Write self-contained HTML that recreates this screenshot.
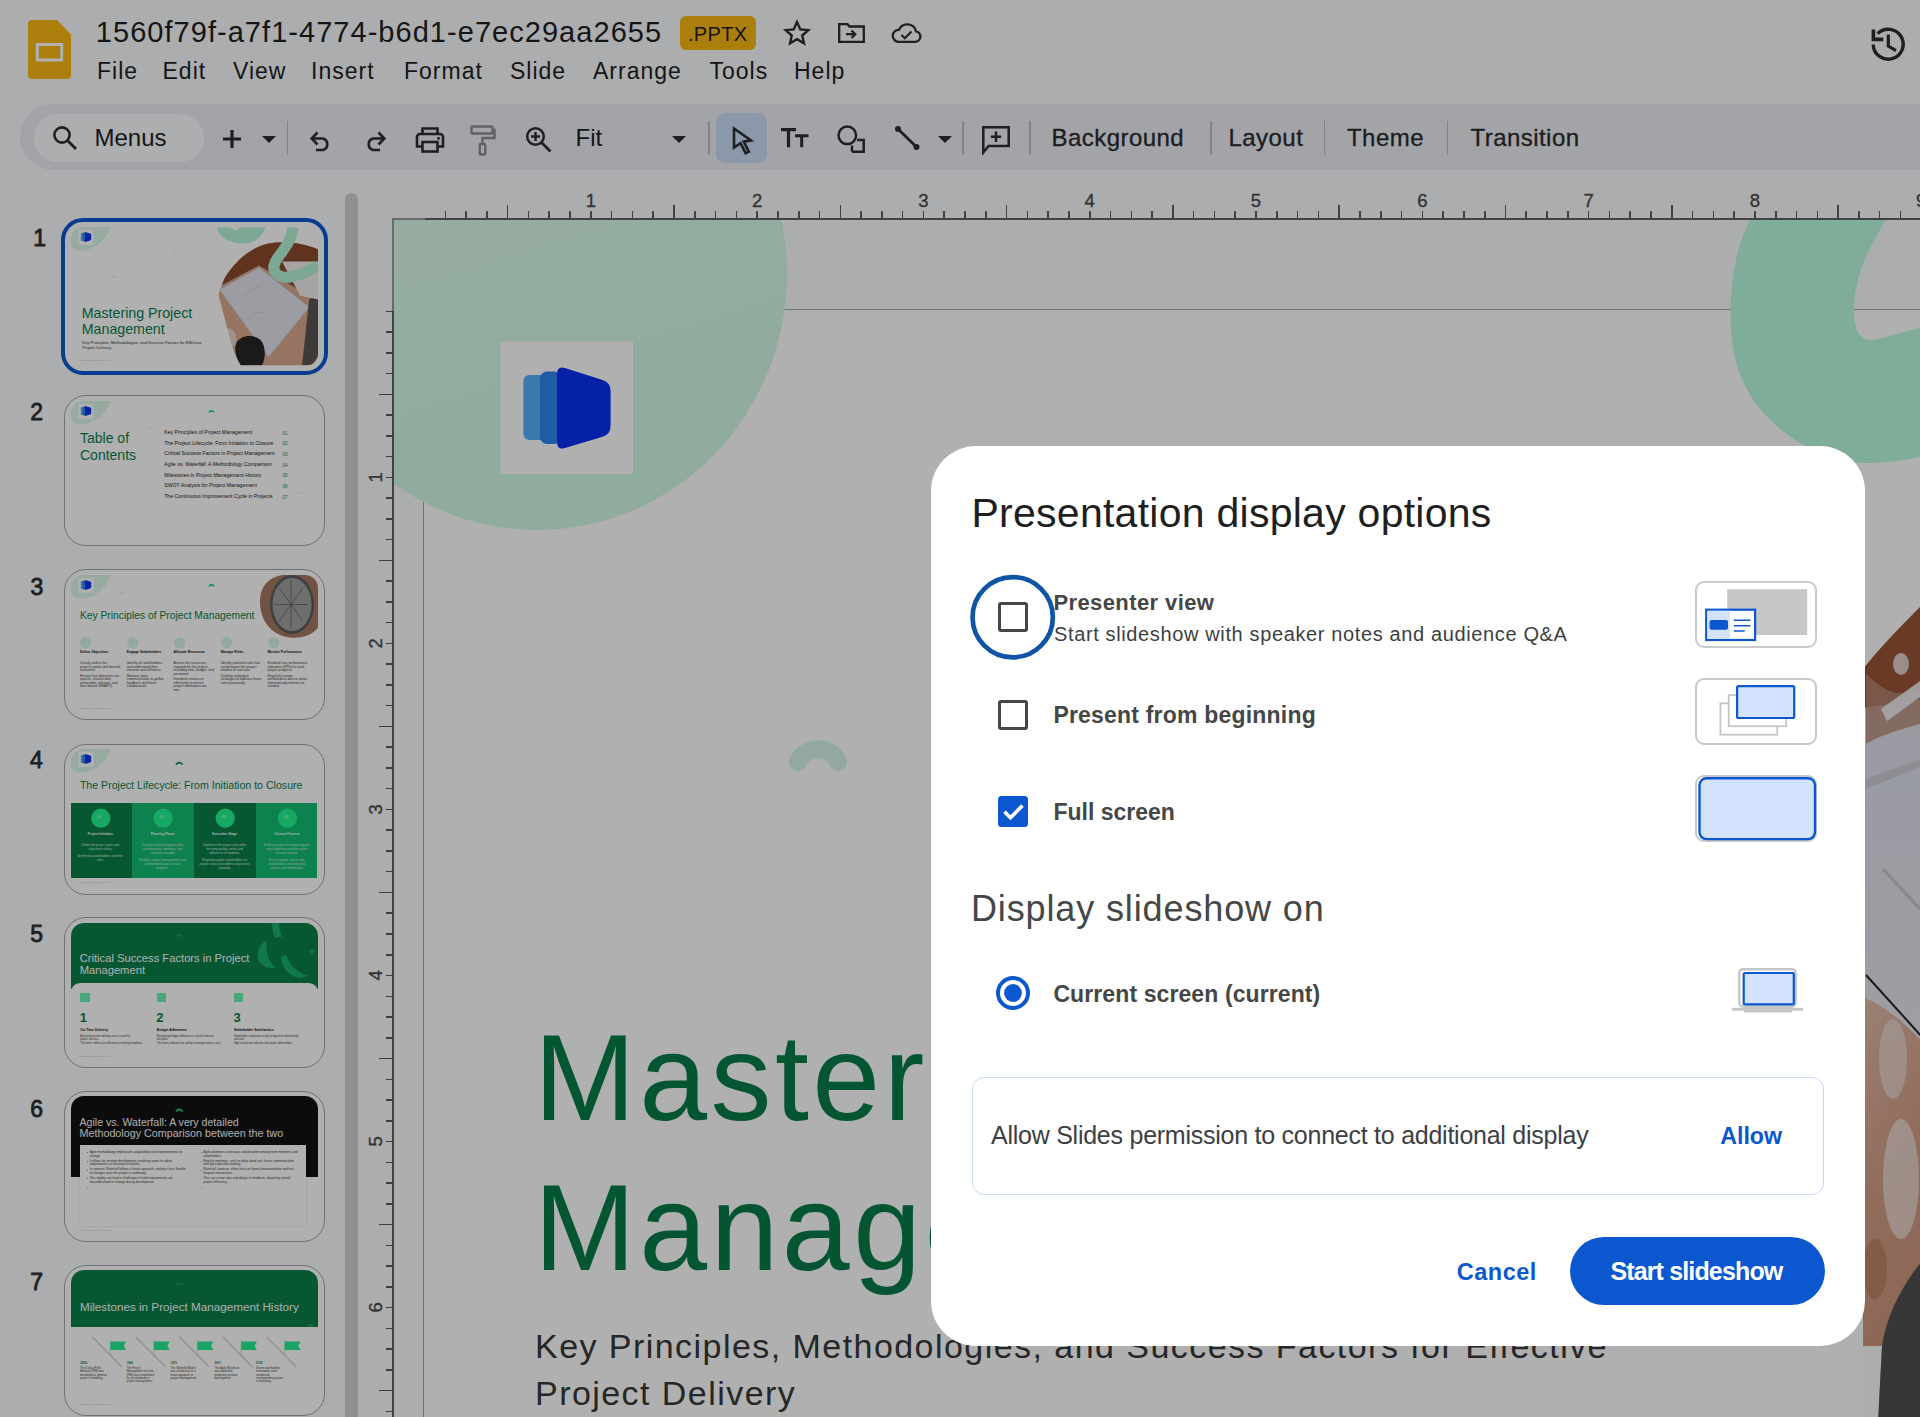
<!DOCTYPE html>
<html><head><meta charset="utf-8">
<style>
*{box-sizing:border-box;margin:0;padding:0}
html,body{width:1920px;height:1417px;overflow:hidden}
body{position:relative;background:#f9fbfd;font-family:"Liberation Sans",sans-serif;color:#1f1f1f}
.a{position:absolute}
.t{position:absolute;line-height:1;white-space:nowrap}
svg{position:absolute;overflow:visible}
/* thumbnails */
.fr{position:absolute;left:64px;width:261px;height:151px;border:1.6px solid #a3a4a6;border-radius:22px;overflow:hidden;background:#fff}
.num{position:absolute;font-size:23px;line-height:1;color:#2e2e30;-webkit-text-stroke:0.8px #2e2e30}
#scrim{position:absolute;left:0;top:0;width:1920px;height:1417px;background:rgba(0,0,0,0.31)}
#dlg{position:absolute;left:931px;top:446px;width:934px;height:900px;background:#fff;border-radius:45px}
.card{position:absolute;left:764px;width:122px;height:67px;border:2px solid #c7c9cb;border-radius:9px;background:#fff}
.cb{position:absolute;left:67px;width:30px;height:30px;border:3.3px solid #444746;border-radius:3px}
.lbl{position:absolute;left:124px;line-height:1;white-space:nowrap;color:#444746;font-weight:bold}
</style></head><body>


<!-- ============ HEADER ============ -->
<svg style="left:28px;top:20px" width="43" height="59" viewBox="0 0 43 59">
  <path d="M4 0H29L43 14.5V55A4 4 0 0 1 39 59H4A4 4 0 0 1 0 55V4A4 4 0 0 1 4 0Z" fill="#f9b814"/>
  <rect x="9.3" y="24.5" width="24.4" height="15.5" fill="none" stroke="#fff" stroke-width="3"/>
</svg>
<div class="t" id="title" style="left:95.8px;top:18px;font-size:29px;letter-spacing:1.04px;color:#1f1f1f">1560f79f-a7f1-4774-b6d1-e7ec29aa2655</div>
<div class="a" style="left:680px;top:16px;width:76px;height:34px;background:#f9b814;border-radius:6px"></div>
<div class="t" style="left:688px;top:23.8px;font-size:20px;color:#1f1f1f;letter-spacing:0.3px">.PPTX</div>
<!-- star -->
<svg style="left:781px;top:18px" width="32" height="30" viewBox="0 0 24 24"><path d="M12 3.2l2.6 5.9 6.4.6-4.8 4.3 1.4 6.3L12 17l-5.6 3.3 1.4-6.3L3 9.7l6.4-.6z" fill="none" stroke="#2c2d30" stroke-width="1.9" stroke-linejoin="miter"/></svg>
<!-- folder move -->
<svg style="left:838px;top:23px" width="27" height="20" viewBox="0 0 27 20"><path d="M1.2 1.2H9.5L11.5 3.5H25.8V18.8H1.2Z" fill="none" stroke="#2c2d30" stroke-width="2.3"/><path d="M8 11.2H17M13.5 7.5L17.3 11.2L13.5 14.9" fill="none" stroke="#2c2d30" stroke-width="2.2"/></svg>
<!-- cloud done -->
<svg style="left:891px;top:24px" width="31" height="19" viewBox="0 0 31 19"><path d="M7.5 17.8H24.5A5.3 5.3 0 0 0 25 7.3A9 9 0 0 0 8 5.8A6 6 0 0 0 7.5 17.8Z" fill="none" stroke="#2c2d30" stroke-width="2.3"/><path d="M10.5 11L13.8 14.2L20.5 7.5" fill="none" stroke="#2c2d30" stroke-width="2.2"/></svg>
<!-- menus -->
<div class="t" style="left:97px;top:60.2px;font-size:23px;letter-spacing:1px">File</div>
<div class="t" style="left:162.5px;top:60.2px;font-size:23px;letter-spacing:1px">Edit</div>
<div class="t" style="left:233px;top:60.2px;font-size:23px;letter-spacing:1px">View</div>
<div class="t" style="left:311px;top:60.2px;font-size:23px;letter-spacing:1px">Insert</div>
<div class="t" style="left:404px;top:60.2px;font-size:23px;letter-spacing:1px">Format</div>
<div class="t" style="left:510px;top:60.2px;font-size:23px;letter-spacing:1px">Slide</div>
<div class="t" style="left:593px;top:60.2px;font-size:23px;letter-spacing:1px">Arrange</div>
<div class="t" style="left:709.5px;top:60.2px;font-size:23px;letter-spacing:1px">Tools</div>
<div class="t" style="left:794px;top:60.2px;font-size:23px;letter-spacing:1px">Help</div>
<!-- history -->
<svg style="left:1866px;top:22px" width="44" height="44" viewBox="0 0 44 44"><path d="M7.2 22.4A15 15 0 1 0 11.6 11.6" fill="none" stroke="#2c2d30" stroke-width="3.4"/><path d="M5.6 7.5V19.2H17.3V15.6H9.2V7.5Z" fill="#2c2d30"/><path d="M22.3 12.5V24L30 28.6" fill="none" stroke="#2c2d30" stroke-width="3.2"/></svg>

<!-- ============ TOOLBAR ============ -->
<div class="a" style="left:20px;top:104px;width:1950px;height:66px;background:#eceef2;border-radius:33px"></div>
<div class="a" style="left:34px;top:113.5px;width:170px;height:48.5px;background:#fbfcfe;border-radius:25px"></div>
<svg style="left:52px;top:125px" width="26" height="26" viewBox="0 0 26 26"><circle cx="10" cy="10" r="7.6" fill="none" stroke="#2c2d30" stroke-width="2.6"/><path d="M15.5 15.5L24 24" stroke="#2c2d30" stroke-width="2.8"/></svg>
<div class="t" style="left:94.5px;top:126.1px;font-size:24px;color:#1f1f1f">Menus</div>
<svg style="left:222px;top:129px" width="20" height="20" viewBox="0 0 20 20"><path d="M10 1V19M1 10H19" stroke="#2c2d30" stroke-width="3.2"/></svg>
<svg style="left:262px;top:136px" width="14" height="8" viewBox="0 0 14 8"><path d="M0 0H14L7 7Z" fill="#2c2d30"/></svg>
<!-- separators -->
<div class="a" style="left:286.7px;top:121px;width:1.8px;height:34px;background:#bfc0c2"></div>
<div class="a" style="left:708px;top:121px;width:1.8px;height:34px;background:#bfc0c2"></div>
<div class="a" style="left:962px;top:121px;width:1.8px;height:34px;background:#bfc0c2"></div>
<div class="a" style="left:1029px;top:121px;width:1.8px;height:34px;background:#bfc0c2"></div>
<div class="a" style="left:1210px;top:121px;width:1.8px;height:34px;background:#bfc0c2"></div>
<div class="a" style="left:1323.5px;top:121px;width:1.8px;height:34px;background:#bfc0c2"></div>
<div class="a" style="left:1446.5px;top:121px;width:1.8px;height:34px;background:#bfc0c2"></div>
<!-- undo / redo -->
<svg style="left:309px;top:130px" width="24" height="21" viewBox="0 0 24 21"><path d="M3 8.5H14A6 6 0 0 1 14 20H7" fill="none" stroke="#2c2d30" stroke-width="2.6"/><path d="M8.5 2.5L2.7 8.5L8.5 14.5" fill="none" stroke="#2c2d30" stroke-width="2.6"/></svg>
<svg style="left:363px;top:130px" width="24" height="21" viewBox="0 0 24 21"><path d="M21 8.5H10A6 6 0 0 0 10 20H17" fill="none" stroke="#2c2d30" stroke-width="2.6"/><path d="M15.5 2.5L21.3 8.5L15.5 14.5" fill="none" stroke="#2c2d30" stroke-width="2.6"/></svg>
<!-- print -->
<svg style="left:415px;top:127px" width="30" height="26" viewBox="0 0 30 26"><path d="M7.5 7V1.5H22.5V7" fill="none" stroke="#2c2d30" stroke-width="2.6"/><path d="M7.5 19.5H2V10A3 3 0 0 1 5 7H25A3 3 0 0 1 28 10V19.5H22.5" fill="none" stroke="#2c2d30" stroke-width="2.6"/><rect x="7.5" y="15" width="15" height="9.5" fill="none" stroke="#2c2d30" stroke-width="2.6"/><circle cx="23.5" cy="11.5" r="1.4" fill="#2c2d30"/></svg>
<!-- paint format (disabled) -->
<svg style="left:470px;top:125px" width="26" height="31" viewBox="0 0 26 31"><rect x="1.5" y="1.5" width="21" height="7" rx="1" fill="none" stroke="#8c8f93" stroke-width="2.4"/><path d="M22.5 5H24.5V13H12.5V19" fill="none" stroke="#8c8f93" stroke-width="2.4"/><rect x="9.8" y="19" width="5.4" height="10.5" rx="1" fill="none" stroke="#8c8f93" stroke-width="2.4"/></svg>
<!-- zoom -->
<svg style="left:525px;top:126px" width="28" height="28" viewBox="0 0 28 28"><circle cx="10.5" cy="10.5" r="8.3" fill="none" stroke="#2c2d30" stroke-width="2.5"/><path d="M16.5 16.5L25.5 25.5" stroke="#2c2d30" stroke-width="2.8"/><path d="M10.5 6V15M6 10.5H15" stroke="#2c2d30" stroke-width="2.4"/></svg>
<div class="t" style="left:575.5px;top:126.1px;font-size:24px;color:#1f1f1f">Fit</div>
<svg style="left:671.5px;top:135.5px" width="14" height="8" viewBox="0 0 14 8"><path d="M0 0H14L7 7Z" fill="#2c2d30"/></svg>
<!-- select active -->
<div class="a" style="left:716.3px;top:113px;width:50.7px;height:50px;background:#cadcf7;border-radius:9px"></div>
<svg style="left:731px;top:126px" width="24" height="29" viewBox="0 0 24 29"><path d="M3 2.5L20 14.5L12.8 15.6L17.8 25.6L14.6 27.2L9.6 17.2L3 21.5Z" fill="none" stroke="#2c2d30" stroke-width="2.6" stroke-linejoin="miter"/></svg>
<!-- text Tt -->
<svg style="left:780px;top:128px" width="30" height="20" viewBox="0 0 30 20"><path d="M1 1.7H16M8.5 1.7V19.3" stroke="#2c2d30" stroke-width="3.2"/><path d="M15 7.8H28.5M21.7 7.8V19.3" stroke="#2c2d30" stroke-width="3"/></svg>
<!-- shapes -->
<svg style="left:837px;top:125px" width="30" height="30" viewBox="0 0 30 30"><circle cx="10.3" cy="10.3" r="8.8" fill="none" stroke="#2c2d30" stroke-width="2.5"/><path d="M15 26.7H26.7V15H20" fill="none" stroke="#2c2d30" stroke-width="2.5"/><path d="M15 20.5V26.7" stroke="#2c2d30" stroke-width="2.5"/></svg>
<!-- line -->
<svg style="left:894px;top:125px" width="27" height="26" viewBox="0 0 27 26"><path d="M4 4L22.5 22" stroke="#2c2d30" stroke-width="2.8"/><circle cx="4" cy="4" r="3" fill="#2c2d30"/><circle cx="22.5" cy="22" r="3" fill="#2c2d30"/></svg>
<svg style="left:938px;top:135.5px" width="14" height="8" viewBox="0 0 14 8"><path d="M0 0H14L7 7Z" fill="#2c2d30"/></svg>
<!-- comment -->
<svg style="left:981px;top:125px" width="30" height="29" viewBox="0 0 30 29"><path d="M2.3 27.5V2.3H27.7V21H7.5Z" fill="none" stroke="#2c2d30" stroke-width="2.5" stroke-linejoin="miter"/><path d="M15 6.5V17M9.8 11.7H20.2" stroke="#2c2d30" stroke-width="2.5"/></svg>
<div class="t" style="left:1051.5px;top:125.9px;font-size:24px;letter-spacing:0.45px;color:#2a2b2e;-webkit-text-stroke:0.3px #2a2b2e">Background</div>
<div class="t" style="left:1228.5px;top:125.9px;font-size:24px;letter-spacing:0.45px;color:#2a2b2e;-webkit-text-stroke:0.3px #2a2b2e">Layout</div>
<div class="t" style="left:1347px;top:125.9px;font-size:24px;letter-spacing:0.45px;color:#2a2b2e;-webkit-text-stroke:0.3px #2a2b2e">Theme</div>
<div class="t" style="left:1470.5px;top:125.9px;font-size:24px;letter-spacing:0.45px;color:#2a2b2e;-webkit-text-stroke:0.3px #2a2b2e">Transition</div>

<!-- ============ FILMSTRIP ============ -->
<div class="num" style="left:33.2px;top:226.8px">1</div>
<div class="num" style="left:30.3px;top:401.1px">2</div>
<div class="num" style="left:30.5px;top:575.6px">3</div>
<div class="num" style="left:30px;top:749.0px">4</div>
<div class="num" style="left:30.3px;top:923.1px">5</div>
<div class="num" style="left:30.3px;top:1097.7px">6</div>
<div class="num" style="left:30.3px;top:1271.4px">7</div>
<div class="a" style="left:61px;top:218px;width:266.5px;height:157px;border:4.2px solid #0b57d0;border-radius:22px;overflow:hidden;background:#fff" id="th1"><!--TH1--><div class="a" style="left:5.8px;top:5.3px;width:247px;height:139px;border-radius:13px;overflow:hidden;background:#fff"><div class="a" style="left:-71px;top:-227.5px"><svg style="left:71px;top:227.5px" width="60" height="40" viewBox="71 227.5 60 40"><path d="M71 227.5 H110.6 C106 241.5 94 251.0 80 251.0 C74 251.0 71 247.5 71 241.5 Z" fill="#d9f6e8"/><rect x="78.3" y="230.3" width="15.2" height="15" fill="#fff"/><rect x="80.8" y="233.5" width="3" height="8" rx="1" fill="#56aef8"/><rect x="82.6" y="233.0" width="3" height="9" rx="1" fill="#2d86f0"/><path d="M85 232.5 L90.2 234.1 Q91.2 234.5 91.2 235.5 V239.5 Q91.2 240.5 90.2 240.9 L85 242.5 Z" fill="#0630f2"/></svg><svg style="left:71px;top:227.5px" width="247" height="139" viewBox="71 227.5 247 139"><defs><clipPath id="p1c"><path d="M224.6 278.4 C235 262 250 248 268.5 244 C285 241 305 244 318 250 V366 H241 C236 358 233 350 232.5 347 C229 336 224 316 218.4 295 Z"/></clipPath></defs><g clip-path="url(#p1c)"><rect x="210" y="235" width="110" height="135" fill="#d9a98f"/><path d="M210 292 L259 266 L318 302 V235 H210Z" fill="#8a4a2c"/><path d="M293 272 L318 285 V300 L300 296Z" fill="#f2efec"/><path d="M219.4 289.9 L259.1 268 L309.3 307.7 L268.5 357.8 Z" fill="#e2e4ec" stroke="#c2c4cc" stroke-width="0.8"/><path d="M244 296 L262 284 M250 320 C252 312 262 310 268 316" stroke="#c9cbd3" stroke-width="0.8" fill="none"/><path d="M309 300 L318 294 V366 H302 L306 330Z" fill="#5a5452"/><path d="M236 344 C240 336 252 334 260 340 C266 346 266 358 262 366 H240 C236 358 234 350 236 344Z" fill="#262626"/><path d="M282 262 L318 262 V300 L300 296Z" fill="#f0eeec"/><path d="M224 330 C232 325 238 335 236 345 L228 350Z" fill="#efe6e2" opacity="0.7"/></g><path d="M216.8 228 C219 238 230 244 243 244 C255 244 262 237 265.4 228 H240 L236 231 L229 228Z" fill="#b4f2d6"/><path d="M293 228 C292 240 284 250 278 258 C268 272 278 280 292 277 C302 275 312 270 318 266" fill="none" stroke="#b4f2d6" stroke-width="11"/><path d="M173.06 254.98 A2.8 2.8 0 0 1 177.54 254.98" fill="none" stroke="#b4f2d6" stroke-width="1" stroke-linecap="round" opacity="0.7"/><path d="M111.76 277.98 A2.8 2.8 0 0 1 116.24 277.98" fill="none" stroke="#b4f2d6" stroke-width="1" stroke-linecap="round" opacity="0.7"/><path d="M189.60 342.05 A3 3 0 0 1 194.40 342.05" fill="none" stroke="#b4f2d6" stroke-width="1" stroke-linecap="round" opacity="0.7"/></svg><div class="t" style="left:82.00px;top:306.38px;font-size:14.2px;color:#077d4b;font-weight:normal;letter-spacing:0px;">Mastering Project</div><div class="t" style="left:82.00px;top:321.78px;font-size:14.2px;color:#077d4b;font-weight:normal;letter-spacing:0px;">Management</div><div class="t" style="left:82.50px;top:340.89px;font-size:4.15px;color:#333;font-weight:normal;letter-spacing:0px;">Key Principles, Methodologies, and Success Factors for Effective</div><div class="t" style="left:82.50px;top:346.49px;font-size:4.15px;color:#333;font-weight:normal;letter-spacing:0px;">Project Delivery</div><div class="t" style="left:80.00px;top:359.64px;font-size:2.2px;color:#bbbbbb;font-weight:normal;letter-spacing:0px;">Mastering Project Management</div></div></div><!--/TH1--></div>
<div class="fr" style="top:395px" id="th2"><!--TH2--><div class="a" style="left:5.5px;top:5.0px;width:247px;height:139px;border-radius:13px;overflow:hidden;background:#fff"><div class="a" style="left:-71px;top:-401.5px"><svg style="left:71px;top:401.5px" width="60" height="40" viewBox="71 401.5 60 40"><path d="M71 401.5 H110.6 C106 415.5 94 425.0 80 425.0 C74 425.0 71 421.5 71 415.5 Z" fill="#d9f6e8"/><rect x="78.3" y="404.3" width="15.2" height="15" fill="#fff"/><rect x="80.8" y="407.5" width="3" height="8" rx="1" fill="#56aef8"/><rect x="82.6" y="407.0" width="3" height="9" rx="1" fill="#2d86f0"/><path d="M85 406.5 L90.2 408.1 Q91.2 408.5 91.2 409.5 V413.5 Q91.2 414.5 90.2 414.9 L85 416.5 Z" fill="#0630f2"/></svg><svg style="left:71px;top:401.5px" width="247" height="139" viewBox="71 401.5 247 139"><path d="M209.26 412.48 A2.8 2.8 0 0 1 213.74 412.48" fill="none" stroke="#1ed98a" stroke-width="1.6" stroke-linecap="round" opacity="1"/><path d="M296.76 493.98 A2.8 2.8 0 0 1 301.24 493.98" fill="none" stroke="#bfeedb" stroke-width="1" stroke-linecap="round" opacity="0.7"/><path d="M148.26 428.98 A2.8 2.8 0 0 1 152.74 428.98" fill="none" stroke="#dddddd" stroke-width="0.8" stroke-linecap="round" opacity="0.7"/></svg><div class="t" style="left:80.50px;top:431.45px;font-size:14px;color:#077d4b;font-weight:normal;letter-spacing:0px;">Table of</div><div class="t" style="left:80.50px;top:448.95px;font-size:14px;color:#077d4b;font-weight:normal;letter-spacing:0px;">Contents</div><div class="t" style="left:164.70px;top:430.60px;font-size:5.2px;color:#222;font-weight:normal;letter-spacing:0px;">Key Principles of Project Management</div><div class="t" style="left:283.00px;top:432.11px;font-size:4.6px;color:#12935a;font-weight:normal;letter-spacing:0px;">01</div><div class="t" style="left:164.70px;top:441.27px;font-size:5.2px;color:#222;font-weight:normal;letter-spacing:0px;">The Project Lifecycle: From Initiation to Closure</div><div class="t" style="left:283.00px;top:442.78px;font-size:4.6px;color:#12935a;font-weight:normal;letter-spacing:0px;">02</div><div class="t" style="left:164.70px;top:451.94px;font-size:5.2px;color:#222;font-weight:normal;letter-spacing:0px;">Critical Success Factors in Project Management</div><div class="t" style="left:283.00px;top:453.45px;font-size:4.6px;color:#12935a;font-weight:normal;letter-spacing:0px;">03</div><div class="t" style="left:164.70px;top:462.61px;font-size:5.2px;color:#222;font-weight:normal;letter-spacing:0px;">Agile vs. Waterfall: A Methodology Comparison</div><div class="t" style="left:283.00px;top:464.12px;font-size:4.6px;color:#12935a;font-weight:normal;letter-spacing:0px;">04</div><div class="t" style="left:164.70px;top:473.28px;font-size:5.2px;color:#222;font-weight:normal;letter-spacing:0px;">Milestones in Project Management History</div><div class="t" style="left:283.00px;top:474.79px;font-size:4.6px;color:#12935a;font-weight:normal;letter-spacing:0px;">05</div><div class="t" style="left:164.70px;top:483.95px;font-size:5.2px;color:#222;font-weight:normal;letter-spacing:0px;">SWOT Analysis for Project Management</div><div class="t" style="left:283.00px;top:485.46px;font-size:4.6px;color:#12935a;font-weight:normal;letter-spacing:0px;">06</div><div class="t" style="left:164.70px;top:494.62px;font-size:5.2px;color:#222;font-weight:normal;letter-spacing:0px;">The Continuous Improvement Cycle in Projects</div><div class="t" style="left:283.00px;top:496.13px;font-size:4.6px;color:#12935a;font-weight:normal;letter-spacing:0px;">07</div></div></div><!--/TH2--></div>
<div class="fr" style="top:569px" id="th3"><!--TH3--><div class="a" style="left:5.5px;top:5.0px;width:247px;height:139px;border-radius:13px;overflow:hidden;background:#fff"><div class="a" style="left:-71px;top:-575.5px"><svg style="left:71px;top:575.5px" width="60" height="40" viewBox="71 575.5 60 40"><path d="M71 575.5 H110.6 C106 589.5 94 599.0 80 599.0 C74 599.0 71 595.5 71 589.5 Z" fill="#d9f6e8"/><rect x="78.3" y="578.3" width="15.2" height="15" fill="#fff"/><rect x="80.8" y="581.5" width="3" height="8" rx="1" fill="#56aef8"/><rect x="82.6" y="581.0" width="3" height="9" rx="1" fill="#2d86f0"/><path d="M85 580.5 L90.2 582.1 Q91.2 582.5 91.2 583.5 V587.5 Q91.2 588.5 90.2 588.9 L85 590.5 Z" fill="#0630f2"/></svg><svg style="left:71px;top:575.5px" width="247" height="139" viewBox="71 575.5 247 139"><path d="M209.26 586.48 A2.8 2.8 0 0 1 213.74 586.48" fill="none" stroke="#1ed98a" stroke-width="1.6" stroke-linecap="round" opacity="1"/><path d="M120.36 593.98 A2.8 2.8 0 0 1 124.84 593.98" fill="none" stroke="#dddddd" stroke-width="1" stroke-linecap="round" opacity="0.7"/><path d="M260 602 C260 584 272 575 290 575 H318 V628 C312 636 302 639 290 638 C272 636 260 622 260 602Z" fill="#a57860"/><ellipse cx="292" cy="605" rx="22" ry="29.5" fill="#5c5c5c"/><ellipse cx="292" cy="605" rx="19.5" ry="26.5" fill="#a0a0a0"/><path d="M291 581V629M274 605H308M279 588L303 622M303 588L279 622" stroke="#4a4a4a" stroke-width="0.6"/><circle cx="85.6" cy="643.3" r="5.6" fill="#d6f4e5"/><circle cx="132.7" cy="643.3" r="5.6" fill="#d6f4e5"/><circle cx="179.7" cy="643.3" r="5.6" fill="#d6f4e5"/><circle cx="226.8" cy="643.3" r="5.6" fill="#d6f4e5"/><circle cx="273.8" cy="643.3" r="5.6" fill="#d6f4e5"/></svg><div class="t" style="left:80.40px;top:611.18px;font-size:10.3px;color:#077d4b;font-weight:normal;letter-spacing:0px;">Key Principles of Project Management</div><div class="t" style="left:80.40px;top:651.82px;font-size:3.4px;color:#111;font-weight:bold;letter-spacing:0px;">Define Objectives</div><div class="t" style="left:127.20px;top:651.82px;font-size:3.4px;color:#111;font-weight:bold;letter-spacing:0px;">Engage Stakeholders</div><div class="t" style="left:174.00px;top:651.82px;font-size:3.4px;color:#111;font-weight:bold;letter-spacing:0px;">Allocate Resources</div><div class="t" style="left:221.20px;top:651.82px;font-size:3.4px;color:#111;font-weight:bold;letter-spacing:0px;">Manage Risks</div><div class="t" style="left:268.00px;top:651.82px;font-size:3.4px;color:#111;font-weight:bold;letter-spacing:0px;">Monitor Performance</div><div class="t" style="left:80.40px;top:662.51px;font-size:3.4px;color:#3a3a3a;font-weight:normal">Clearly outline the</div><div class="t" style="left:80.40px;top:666.01px;font-size:3.4px;color:#3a3a3a;font-weight:normal">project's goals and desired</div><div class="t" style="left:80.40px;top:669.51px;font-size:3.4px;color:#3a3a3a;font-weight:normal">outcomes.</div><div class="t" style="left:80.40px;top:675.41px;font-size:3.4px;color:#3a3a3a;font-weight:normal">Ensure that objectives are</div><div class="t" style="left:80.40px;top:678.91px;font-size:3.4px;color:#3a3a3a;font-weight:normal">specific, measurable,</div><div class="t" style="left:80.40px;top:682.41px;font-size:3.4px;color:#3a3a3a;font-weight:normal">achievable, relevant, and</div><div class="t" style="left:80.40px;top:685.91px;font-size:3.4px;color:#3a3a3a;font-weight:normal">time-bound (SMART).</div><div class="t" style="left:127.20px;top:662.51px;font-size:3.4px;color:#3a3a3a;font-weight:normal">Identify all stakeholders</div><div class="t" style="left:127.20px;top:666.01px;font-size:3.4px;color:#3a3a3a;font-weight:normal">and understand their</div><div class="t" style="left:127.20px;top:669.51px;font-size:3.4px;color:#3a3a3a;font-weight:normal">interests and influence.</div><div class="t" style="left:127.20px;top:675.41px;font-size:3.4px;color:#3a3a3a;font-weight:normal">Maintain open</div><div class="t" style="left:127.20px;top:678.91px;font-size:3.4px;color:#3a3a3a;font-weight:normal">communication to gather</div><div class="t" style="left:127.20px;top:682.41px;font-size:3.4px;color:#3a3a3a;font-weight:normal">feedback and foster</div><div class="t" style="left:127.20px;top:685.91px;font-size:3.4px;color:#3a3a3a;font-weight:normal">collaboration.</div><div class="t" style="left:174.00px;top:662.51px;font-size:3.4px;color:#3a3a3a;font-weight:normal">Assess the resources</div><div class="t" style="left:174.00px;top:666.01px;font-size:3.4px;color:#3a3a3a;font-weight:normal">required for the project,</div><div class="t" style="left:174.00px;top:669.51px;font-size:3.4px;color:#3a3a3a;font-weight:normal">including time, budget, and</div><div class="t" style="left:174.00px;top:673.01px;font-size:3.4px;color:#3a3a3a;font-weight:normal">personnel.</div><div class="t" style="left:174.00px;top:678.91px;font-size:3.4px;color:#3a3a3a;font-weight:normal">Distribute resources</div><div class="t" style="left:174.00px;top:682.41px;font-size:3.4px;color:#3a3a3a;font-weight:normal">effectively to ensure</div><div class="t" style="left:174.00px;top:685.91px;font-size:3.4px;color:#3a3a3a;font-weight:normal">project milestones are</div><div class="t" style="left:174.00px;top:689.41px;font-size:3.4px;color:#3a3a3a;font-weight:normal">met.</div><div class="t" style="left:221.20px;top:662.51px;font-size:3.4px;color:#3a3a3a;font-weight:normal">Identify potential risks that</div><div class="t" style="left:221.20px;top:666.01px;font-size:3.4px;color:#3a3a3a;font-weight:normal">could impact the project</div><div class="t" style="left:221.20px;top:669.51px;font-size:3.4px;color:#3a3a3a;font-weight:normal">timeline or success.</div><div class="t" style="left:221.20px;top:675.41px;font-size:3.4px;color:#3a3a3a;font-weight:normal">Develop mitigation</div><div class="t" style="left:221.20px;top:678.91px;font-size:3.4px;color:#3a3a3a;font-weight:normal">strategies to address these</div><div class="t" style="left:221.20px;top:682.41px;font-size:3.4px;color:#3a3a3a;font-weight:normal">risks proactively.</div><div class="t" style="left:268.00px;top:662.51px;font-size:3.4px;color:#3a3a3a;font-weight:normal">Establish key performance</div><div class="t" style="left:268.00px;top:666.01px;font-size:3.4px;color:#3a3a3a;font-weight:normal">indicators (KPIs) to track</div><div class="t" style="left:268.00px;top:669.51px;font-size:3.4px;color:#3a3a3a;font-weight:normal">project progress.</div><div class="t" style="left:268.00px;top:675.41px;font-size:3.4px;color:#3a3a3a;font-weight:normal">Regularly review</div><div class="t" style="left:268.00px;top:678.91px;font-size:3.4px;color:#3a3a3a;font-weight:normal">performance data to make</div><div class="t" style="left:268.00px;top:682.41px;font-size:3.4px;color:#3a3a3a;font-weight:normal">informed adjustments as</div><div class="t" style="left:268.00px;top:685.91px;font-size:3.4px;color:#3a3a3a;font-weight:normal">needed.</div><div class="t" style="left:80.00px;top:707.64px;font-size:2.2px;color:#bbbbbb;font-weight:normal;letter-spacing:0px;">Mastering Project Management</div></div></div><!--/TH3--></div>
<div class="fr" style="top:743.6px" id="th4"><!--TH4--><div class="a" style="left:5.5px;top:4.2px;width:247px;height:139px;border-radius:13px;overflow:hidden;background:#fff"><div class="a" style="left:-71px;top:-749.3px"><svg style="left:71px;top:749.3px" width="60" height="40" viewBox="71 749.3 60 40"><path d="M71 749.3 H110.6 C106 763.3 94 772.8 80 772.8 C74 772.8 71 769.3 71 763.3 Z" fill="#d9f6e8"/><rect x="78.3" y="752.0999999999999" width="15.2" height="15" fill="#fff"/><rect x="80.8" y="755.3" width="3" height="8" rx="1" fill="#56aef8"/><rect x="82.6" y="754.8" width="3" height="9" rx="1" fill="#2d86f0"/><path d="M85 754.3 L90.2 755.9 Q91.2 756.3 91.2 757.3 V761.3 Q91.2 762.3 90.2 762.6999999999999 L85 764.3 Z" fill="#0630f2"/></svg><svg style="left:71px;top:749.3px" width="247" height="139" viewBox="71 749.3 247 139"><path d="M176.50 764.23 A3.5 3.5 0 0 1 182.10 764.23" fill="none" stroke="#0d8a52" stroke-width="1.8" stroke-linecap="round" opacity="1"/></svg><div class="t" style="left:80.40px;top:780.03px;font-size:10.6px;color:#077d4b;font-weight:normal;letter-spacing:0px;">The Project Lifecycle: From Initiation to Closure</div><div class="a" style="left:71.00px;top:804.00px;width:61.00px;height:74.50px;background:#0c7f4b;border-radius:0px;"></div><div class="a" style="left:132.00px;top:804.00px;width:62.30px;height:74.50px;background:#14bb72;border-radius:0px;"></div><div class="a" style="left:194.30px;top:804.00px;width:62.30px;height:74.50px;background:#0c7f4b;border-radius:0px;"></div><div class="a" style="left:256.60px;top:804.00px;width:61.40px;height:74.50px;background:#14bb72;border-radius:0px;"></div><svg style="left:71px;top:749.3px" width="247" height="139" viewBox="71 749.3 247 139"><circle cx="100.8" cy="818.5" r="9.6" fill="#22f590"/><circle cx="163.1" cy="818.5" r="9.6" fill="#22f590"/><circle cx="225.2" cy="818.5" r="9.6" fill="#22f590"/><circle cx="287.4" cy="818.5" r="9.6" fill="#22f590"/></svg><div class="t" style="left:97.80px;top:816.95px;font-size:3.6px;color:#e8fff2;font-weight:normal;letter-spacing:0px;">01</div><div class="t" style="left:70.80px;width:60px;text-align:center;top:833.71px;font-size:3.2px;color:#f2fff8;font-weight:bold">Project Initiation</div><div class="t" style="left:69.80px;width:62px;text-align:center;top:844.41px;font-size:3.0px;color:#d8efe2;font-weight:normal">Define the project goals and</div><div class="t" style="left:69.80px;width:62px;text-align:center;top:848.61px;font-size:3.0px;color:#d8efe2;font-weight:normal">objectives clearly.</div><div class="t" style="left:69.80px;width:62px;text-align:center;top:855.41px;font-size:3.0px;color:#d8efe2;font-weight:normal">Identify key stakeholders and their</div><div class="t" style="left:69.80px;width:62px;text-align:center;top:859.61px;font-size:3.0px;color:#d8efe2;font-weight:normal">roles.</div><div class="t" style="left:160.10px;top:816.95px;font-size:3.6px;color:#e8fff2;font-weight:normal;letter-spacing:0px;">02</div><div class="t" style="left:133.10px;width:60px;text-align:center;top:833.71px;font-size:3.2px;color:#f2fff8;font-weight:bold">Planning Phase</div><div class="t" style="left:132.10px;width:62px;text-align:center;top:844.41px;font-size:3.0px;color:#d8efe2;font-weight:normal">Develop a detailed project plan</div><div class="t" style="left:132.10px;width:62px;text-align:center;top:848.61px;font-size:3.0px;color:#d8efe2;font-weight:normal">outlining tasks, timelines, and</div><div class="t" style="left:132.10px;width:62px;text-align:center;top:852.81px;font-size:3.0px;color:#d8efe2;font-weight:normal">resources needed.</div><div class="t" style="left:132.10px;width:62px;text-align:center;top:859.61px;font-size:3.0px;color:#d8efe2;font-weight:normal">Establish project management tools</div><div class="t" style="left:132.10px;width:62px;text-align:center;top:863.81px;font-size:3.0px;color:#d8efe2;font-weight:normal">and methodologies to track</div><div class="t" style="left:132.10px;width:62px;text-align:center;top:868.01px;font-size:3.0px;color:#d8efe2;font-weight:normal">progress.</div><div class="t" style="left:222.20px;top:816.95px;font-size:3.6px;color:#e8fff2;font-weight:normal;letter-spacing:0px;">03</div><div class="t" style="left:195.20px;width:60px;text-align:center;top:833.71px;font-size:3.2px;color:#f2fff8;font-weight:bold">Execution Stage</div><div class="t" style="left:194.20px;width:62px;text-align:center;top:844.41px;font-size:3.0px;color:#d8efe2;font-weight:normal">Implement the project plan while</div><div class="t" style="left:194.20px;width:62px;text-align:center;top:848.61px;font-size:3.0px;color:#d8efe2;font-weight:normal">ensuring quality control and</div><div class="t" style="left:194.20px;width:62px;text-align:center;top:852.81px;font-size:3.0px;color:#d8efe2;font-weight:normal">adherence to timelines.</div><div class="t" style="left:194.20px;width:62px;text-align:center;top:859.61px;font-size:3.0px;color:#d8efe2;font-weight:normal">Regularly update stakeholders on</div><div class="t" style="left:194.20px;width:62px;text-align:center;top:863.81px;font-size:3.0px;color:#d8efe2;font-weight:normal">project status and address any issues</div><div class="t" style="left:194.20px;width:62px;text-align:center;top:868.01px;font-size:3.0px;color:#d8efe2;font-weight:normal">promptly.</div><div class="t" style="left:284.40px;top:816.95px;font-size:3.6px;color:#e8fff2;font-weight:normal;letter-spacing:0px;">04</div><div class="t" style="left:257.40px;width:60px;text-align:center;top:833.71px;font-size:3.2px;color:#f2fff8;font-weight:bold">Closure Process</div><div class="t" style="left:256.40px;width:62px;text-align:center;top:844.41px;font-size:3.0px;color:#d8efe2;font-weight:normal">Evaluate project outcomes against</div><div class="t" style="left:256.40px;width:62px;text-align:center;top:848.61px;font-size:3.0px;color:#d8efe2;font-weight:normal">initial objectives and document</div><div class="t" style="left:256.40px;width:62px;text-align:center;top:852.81px;font-size:3.0px;color:#d8efe2;font-weight:normal">lessons learned.</div><div class="t" style="left:256.40px;width:62px;text-align:center;top:859.61px;font-size:3.0px;color:#d8efe2;font-weight:normal">Ensure proper closure with</div><div class="t" style="left:256.40px;width:62px;text-align:center;top:863.81px;font-size:3.0px;color:#d8efe2;font-weight:normal">stakeholders, including final</div><div class="t" style="left:256.40px;width:62px;text-align:center;top:868.01px;font-size:3.0px;color:#d8efe2;font-weight:normal">reports and celebrations.</div><div class="t" style="left:80.00px;top:881.44px;font-size:2.2px;color:#bbbbbb;font-weight:normal;letter-spacing:0px;">Mastering Project Management</div></div></div><!--/TH4--></div>
<div class="fr" style="top:917px" id="th5"><!--TH5--><div class="a" style="left:5.5px;top:4.7px;width:247px;height:139px;border-radius:13px;overflow:hidden;background:#fff"><div class="a" style="left:-71px;top:-923.2px"><div class="a" style="left:71.00px;top:923.20px;width:247.00px;height:66.80px;background:#0c7f4b;border-radius:0px;"></div><svg style="left:71px;top:923.2px" width="247" height="139" viewBox="71 923.2 247 139"><path d="M271.5 923 H279 C279 929 280.5 933 282 937 L275 938 C273 933 272 928 271.5 923Z" fill="#17b06a"/><path d="M267 940.5 C257 945 255 958 261 964 C265 968 271 969 276 968 C268 962 265 951 267 940.5Z" fill="#17b06a"/><path d="M281 957 C282 968 288 976 299 978 C303 978.5 306 977 308 975.5 C298 974 290 966 286 955Z" fill="#17b06a"/><path d="M308 950.5 L316 950.5 L312 954Z" fill="#17b06a"/><path d="M176.50 936.23 A3.5 3.5 0 0 1 182.10 936.23" fill="none" stroke="#13a062" stroke-width="1.6" stroke-linecap="round" opacity="1"/></svg><div class="a" style="left:71.00px;top:983.30px;width:247.00px;height:78.90px;background:#fff;border-radius:9px;"></div><div class="t" style="left:80.20px;top:953.82px;font-size:11.2px;color:#fff;font-weight:normal;letter-spacing:0px;">Critical Success Factors in Project</div><div class="t" style="left:80.20px;top:965.42px;font-size:11.2px;color:#fff;font-weight:normal;letter-spacing:0px;">Management</div><div class="a" style="left:80.80px;top:993.90px;width:9.50px;height:9.10px;background:#6cf5b4;border-radius:0px;"></div><div class="t" style="left:80.30px;top:1011.00px;font-size:13px;color:#077d4b;font-weight:bold;letter-spacing:0px;">1</div><div class="t" style="left:80.80px;top:1029.42px;font-size:3.4px;color:#111;font-weight:bold;letter-spacing:0px;">On-Time Delivery</div><div class="t" style="left:80.80px;top:1036.01px;font-size:2.6px;color:#3a3a3a;font-weight:normal">Achieving on-time delivery rate is crucial for</div><div class="t" style="left:80.80px;top:1039.81px;font-size:2.6px;color:#3a3a3a;font-weight:normal">project success.</div><div class="t" style="left:80.80px;top:1043.61px;font-size:2.6px;color:#3a3a3a;font-weight:normal">The metric reflects our efficiency in meeting deadlines.</div><div class="a" style="left:157.30px;top:993.90px;width:9.50px;height:9.10px;background:#6cf5b4;border-radius:0px;"></div><div class="t" style="left:156.80px;top:1011.00px;font-size:13px;color:#077d4b;font-weight:bold;letter-spacing:0px;">2</div><div class="t" style="left:157.30px;top:1029.42px;font-size:3.4px;color:#111;font-weight:bold;letter-spacing:0px;">Budget Adherence</div><div class="t" style="left:157.30px;top:1036.01px;font-size:2.6px;color:#3a3a3a;font-weight:normal">Maintaining budget adherence is vital for financial</div><div class="t" style="left:157.30px;top:1039.81px;font-size:2.6px;color:#3a3a3a;font-weight:normal">discipline.</div><div class="t" style="left:157.30px;top:1043.61px;font-size:2.6px;color:#3a3a3a;font-weight:normal">This metric indicates our ability to manage project costs</div><div class="a" style="left:234.40px;top:993.90px;width:9.50px;height:9.10px;background:#6cf5b4;border-radius:0px;"></div><div class="t" style="left:233.90px;top:1011.00px;font-size:13px;color:#077d4b;font-weight:bold;letter-spacing:0px;">3</div><div class="t" style="left:234.40px;top:1029.42px;font-size:3.4px;color:#111;font-weight:bold;letter-spacing:0px;">Stakeholder Satisfaction</div><div class="t" style="left:234.40px;top:1036.01px;font-size:2.6px;color:#3a3a3a;font-weight:normal">Stakeholder satisfaction is key to long-term relationships</div><div class="t" style="left:234.40px;top:1039.81px;font-size:2.6px;color:#3a3a3a;font-weight:normal">and trust.</div><div class="t" style="left:234.40px;top:1043.61px;font-size:2.6px;color:#3a3a3a;font-weight:normal">High satisfaction indicates that project deliverables</div><div class="t" style="left:80.00px;top:1055.34px;font-size:2.2px;color:#bbbbbb;font-weight:normal;letter-spacing:0px;">Mastering Project Management</div></div></div><!--/TH5--></div>
<div class="fr" style="top:1090.7px" id="th6"><!--TH6--><div class="a" style="left:5.5px;top:4.8px;width:247px;height:139px;border-radius:13px;overflow:hidden;background:#fff"><div class="a" style="left:-71px;top:-1097px"><div class="a" style="left:71.00px;top:1097.00px;width:247.00px;height:81.00px;background:#121212;border-radius:0px;"></div><svg style="left:71px;top:1097px" width="247" height="139" viewBox="71 1097 247 139"><path d="M176.50 1111.72 A3.5 3.5 0 0 1 182.10 1111.72" fill="none" stroke="#1ed98a" stroke-width="1.8" stroke-linecap="round" opacity="1"/></svg><div class="t" style="left:80.00px;top:1117.43px;font-size:10.6px;color:#fafafa;font-weight:normal;letter-spacing:0px;">Agile vs. Waterfall: A very detailed</div><div class="t" style="left:80.00px;top:1128.20px;font-size:10.75px;color:#fafafa;font-weight:normal;letter-spacing:0px;">Methodology Comparison between the two</div><div class="a" style="left:80.10px;top:1146.00px;width:226.00px;height:80.20px;background:#fff;border-radius:0px;box-shadow:0 0 2px rgba(0,0,0,0.15)"></div><div class="a" style="left:87.40px;top:1152.65px;width:0.90px;height:0.90px;background:#777;border-radius:0.5px;"></div><div class="t" style="left:90.20px;top:1151.54px;font-size:3.15px;color:#3a3a3a;font-weight:normal">Agile methodology emphasizes adaptability and responsiveness to</div><div class="t" style="left:90.20px;top:1155.04px;font-size:3.15px;color:#3a3a3a;font-weight:normal">change.</div><div class="a" style="left:87.40px;top:1161.35px;width:0.90px;height:0.90px;background:#777;border-radius:0.5px;"></div><div class="t" style="left:90.20px;top:1160.24px;font-size:3.15px;color:#3a3a3a;font-weight:normal">It allows for iterative development, enabling teams to adjust</div><div class="t" style="left:90.20px;top:1163.74px;font-size:3.15px;color:#3a3a3a;font-weight:normal">requirements as the project evolves.</div><div class="a" style="left:87.40px;top:1170.05px;width:0.90px;height:0.90px;background:#777;border-radius:0.5px;"></div><div class="t" style="left:90.20px;top:1168.94px;font-size:3.15px;color:#3a3a3a;font-weight:normal">In contrast, Waterfall follows a linear approach, making it less flexible</div><div class="t" style="left:90.20px;top:1172.44px;font-size:3.15px;color:#3a3a3a;font-weight:normal">to changes once the project is underway.</div><div class="a" style="left:87.40px;top:1178.75px;width:0.90px;height:0.90px;background:#777;border-radius:0.5px;"></div><div class="t" style="left:90.20px;top:1177.64px;font-size:3.15px;color:#3a3a3a;font-weight:normal">This rigidity can lead to challenges if initial requirements are</div><div class="t" style="left:90.20px;top:1181.14px;font-size:3.15px;color:#3a3a3a;font-weight:normal">misunderstood or change during development.</div><div class="a" style="left:87.40px;top:1187.45px;width:0.90px;height:0.90px;background:#999;border-radius:0.5px;"></div><div class="t" style="left:90.20px;top:1186.68px;font-size:2.45px;color:#777;font-weight:normal">...</div><div class="a" style="left:201.00px;top:1152.65px;width:0.90px;height:0.90px;background:#777;border-radius:0.5px;"></div><div class="t" style="left:203.80px;top:1151.54px;font-size:3.15px;color:#3a3a3a;font-weight:normal">Agile promotes continuous collaboration among team members and</div><div class="t" style="left:203.80px;top:1155.04px;font-size:3.15px;color:#3a3a3a;font-weight:normal">stakeholders.</div><div class="a" style="left:201.00px;top:1161.35px;width:0.90px;height:0.90px;background:#777;border-radius:0.5px;"></div><div class="t" style="left:203.80px;top:1160.24px;font-size:3.15px;color:#3a3a3a;font-weight:normal">Regular meetings, such as daily stand-ups, foster communication</div><div class="t" style="left:203.80px;top:1163.74px;font-size:3.15px;color:#3a3a3a;font-weight:normal">and quick decision-making.</div><div class="a" style="left:201.00px;top:1170.05px;width:0.90px;height:0.90px;background:#777;border-radius:0.5px;"></div><div class="t" style="left:203.80px;top:1168.94px;font-size:3.15px;color:#3a3a3a;font-weight:normal">Waterfall, however, often relies on formal documentation and less</div><div class="t" style="left:203.80px;top:1172.44px;font-size:3.15px;color:#3a3a3a;font-weight:normal">frequent interactions.</div><div class="a" style="left:201.00px;top:1178.75px;width:0.90px;height:0.90px;background:#777;border-radius:0.5px;"></div><div class="t" style="left:203.80px;top:1177.64px;font-size:3.15px;color:#3a3a3a;font-weight:normal">This can create silos and delays in feedback, impacting overall</div><div class="t" style="left:203.80px;top:1181.14px;font-size:3.15px;color:#3a3a3a;font-weight:normal">project efficiency.</div><div class="a" style="left:201.00px;top:1187.45px;width:0.90px;height:0.90px;background:#999;border-radius:0.5px;"></div><div class="t" style="left:203.80px;top:1186.68px;font-size:2.45px;color:#777;font-weight:normal">...</div><div class="t" style="left:80.00px;top:1229.14px;font-size:2.2px;color:#bbbbbb;font-weight:normal;letter-spacing:0px;">Mastering Project Management</div></div></div><!--/TH6--></div>
<div class="fr" style="top:1264.7px" id="th7"><!--TH7--><div class="a" style="left:5.5px;top:4.8px;width:247px;height:139px;border-radius:13px;overflow:hidden;background:#fff"><div class="a" style="left:-71px;top:-1271px"><div class="a" style="left:71.00px;top:1271.00px;width:247.00px;height:57.00px;background:#0c7f4b;border-radius:0px;"></div><svg style="left:71px;top:1271px" width="247" height="139" viewBox="71 1271 247 139"><path d="M176.50 1285.72 A3.5 3.5 0 0 1 182.10 1285.72" fill="none" stroke="#13a062" stroke-width="1.6" stroke-linecap="round" opacity="1"/><path d="M308.84 1326.77 A2.2 2.2 0 0 1 312.36 1326.77" fill="none" stroke="#4fd39a" stroke-width="1" stroke-linecap="round" opacity="1"/></svg><div class="t" style="left:80.40px;top:1301.20px;font-size:11.7px;color:#fafafa;font-weight:normal;letter-spacing:0px;">Milestones in Project Management History</div><svg style="left:71px;top:1271px" width="247" height="139" viewBox="71 1271 247 139"><path d="M92.3 1338 L121.9 1368" stroke="#cfcfcf" stroke-width="1.2"/><path d="M110.3 1340.7 V1356.8" stroke="#7fe0b3" stroke-width="0.5"/><path d="M110.3 1342.5 H126.1 L123.8 1346.8 L126.1 1351 H110.3 Z" fill="#26ee92"/></svg><div class="t" style="left:80.40px;top:1362.63px;font-size:2.8px;color:#0a7a48;font-weight:bold;letter-spacing:0px;">1950s</div><div class="t" style="left:80.40px;top:1367.71px;font-size:2.8px;color:#3a3a3a;font-weight:normal">The Critical Path</div><div class="t" style="left:80.40px;top:1370.91px;font-size:2.8px;color:#3a3a3a;font-weight:normal">Method (CPM) was</div><div class="t" style="left:80.40px;top:1374.11px;font-size:2.8px;color:#3a3a3a;font-weight:normal">developed to optimize</div><div class="t" style="left:80.40px;top:1377.31px;font-size:2.8px;color:#3a3a3a;font-weight:normal">project scheduling.</div><svg style="left:71px;top:1271px" width="247" height="139" viewBox="71 1271 247 139"><path d="M135.9 1338 L165.5 1368" stroke="#cfcfcf" stroke-width="1.2"/><path d="M153.9 1340.7 V1356.8" stroke="#7fe0b3" stroke-width="0.5"/><path d="M153.9 1342.5 H169.7 L167.4 1346.8 L169.7 1351 H153.9 Z" fill="#26ee92"/></svg><div class="t" style="left:127.20px;top:1362.63px;font-size:2.8px;color:#0a7a48;font-weight:bold;letter-spacing:0px;">1969</div><div class="t" style="left:127.20px;top:1367.71px;font-size:2.8px;color:#3a3a3a;font-weight:normal">The Project</div><div class="t" style="left:127.20px;top:1370.91px;font-size:2.8px;color:#3a3a3a;font-weight:normal">Management Institute</div><div class="t" style="left:127.20px;top:1374.11px;font-size:2.8px;color:#3a3a3a;font-weight:normal">(PMI) was established</div><div class="t" style="left:127.20px;top:1377.31px;font-size:2.8px;color:#3a3a3a;font-weight:normal">to set standards in</div><div class="t" style="left:127.20px;top:1380.51px;font-size:2.8px;color:#3a3a3a;font-weight:normal">project management.</div><svg style="left:71px;top:1271px" width="247" height="139" viewBox="71 1271 247 139"><path d="M179.5 1338 L209.1 1368" stroke="#cfcfcf" stroke-width="1.2"/><path d="M197.5 1340.7 V1356.8" stroke="#7fe0b3" stroke-width="0.5"/><path d="M197.5 1342.5 H213.3 L211.0 1346.8 L213.3 1351 H197.5 Z" fill="#26ee92"/></svg><div class="t" style="left:171.10px;top:1362.63px;font-size:2.8px;color:#0a7a48;font-weight:bold;letter-spacing:0px;">1970</div><div class="t" style="left:171.10px;top:1367.71px;font-size:2.8px;color:#3a3a3a;font-weight:normal">The Waterfall Model</div><div class="t" style="left:171.10px;top:1370.91px;font-size:2.8px;color:#3a3a3a;font-weight:normal">was introduced as a</div><div class="t" style="left:171.10px;top:1374.11px;font-size:2.8px;color:#3a3a3a;font-weight:normal">linear approach to</div><div class="t" style="left:171.10px;top:1377.31px;font-size:2.8px;color:#3a3a3a;font-weight:normal">project management.</div><svg style="left:71px;top:1271px" width="247" height="139" viewBox="71 1271 247 139"><path d="M223.1 1338 L252.7 1368" stroke="#cfcfcf" stroke-width="1.2"/><path d="M241.1 1340.7 V1356.8" stroke="#7fe0b3" stroke-width="0.5"/><path d="M241.1 1342.5 H256.9 L254.6 1346.8 L256.9 1351 H241.1 Z" fill="#26ee92"/></svg><div class="t" style="left:215.00px;top:1362.63px;font-size:2.8px;color:#0a7a48;font-weight:bold;letter-spacing:0px;">2001</div><div class="t" style="left:215.00px;top:1367.71px;font-size:2.8px;color:#3a3a3a;font-weight:normal">The Agile Manifesto</div><div class="t" style="left:215.00px;top:1370.91px;font-size:2.8px;color:#3a3a3a;font-weight:normal">was published,</div><div class="t" style="left:215.00px;top:1374.11px;font-size:2.8px;color:#3a3a3a;font-weight:normal">promoting iterative</div><div class="t" style="left:215.00px;top:1377.31px;font-size:2.8px;color:#3a3a3a;font-weight:normal">development.</div><svg style="left:71px;top:1271px" width="247" height="139" viewBox="71 1271 247 139"><path d="M266.7 1338 L296.3 1368" stroke="#cfcfcf" stroke-width="1.2"/><path d="M284.7 1340.7 V1356.8" stroke="#7fe0b3" stroke-width="0.5"/><path d="M284.7 1342.5 H300.5 L298.2 1346.8 L300.5 1351 H284.7 Z" fill="#26ee92"/></svg><div class="t" style="left:256.60px;top:1362.63px;font-size:2.8px;color:#0a7a48;font-weight:bold;letter-spacing:0px;">2018</div><div class="t" style="left:256.60px;top:1367.71px;font-size:2.8px;color:#3a3a3a;font-weight:normal">Scrum and Kanban</div><div class="t" style="left:256.60px;top:1370.91px;font-size:2.8px;color:#3a3a3a;font-weight:normal">frameworks were</div><div class="t" style="left:256.60px;top:1374.11px;font-size:2.8px;color:#3a3a3a;font-weight:normal">introduced,</div><div class="t" style="left:256.60px;top:1377.31px;font-size:2.8px;color:#3a3a3a;font-weight:normal">revolutionizing project</div><div class="t" style="left:256.60px;top:1380.51px;font-size:2.8px;color:#3a3a3a;font-weight:normal">e marketing.</div><div class="t" style="left:80.00px;top:1403.14px;font-size:2.2px;color:#bbbbbb;font-weight:normal;letter-spacing:0px;">Mastering Project Management</div></div></div><!--/TH7--></div>
<!-- ============ RULERS ============ -->
<div class="a" style="left:345px;top:193px;width:13px;height:1300px;background:#cfd1d4;border-radius:6.5px"></div>
<div class="a" id="slide" style="left:393px;top:219px;width:1600px;height:1250px;background:#f9fbfd;overflow:hidden">
<div class="a" style="left:31px;top:91px;width:1600px;height:1200px;background:#fff"></div>

<div class="a" style="left:31px;top:90px;width:1600px;height:1px;background:#a3a3a3"></div>
<div class="a" style="left:30px;top:90px;width:1.3px;height:1200px;background:#a3a3a3"></div>
<svg style="left:0;top:0" width="1600" height="1250">
  <defs>
    <linearGradient id="mg" x1="0" y1="0" x2="0.3" y2="1"><stop offset="0" stop-color="#e4f9ef"/><stop offset="1" stop-color="#cff9e4"/></linearGradient>
    <clipPath id="photoclip"><path d="M1470 450 C1490 425 1510 405 1540 375 V1260 H1470 Z"/></clipPath>
  </defs>
  <ellipse cx="144" cy="55" rx="250" ry="256" fill="url(#mg)"/>
  <rect x="107.5" y="122.5" width="132.5" height="132.5" fill="#fff"/>
  <rect x="130.4" y="156" width="23.2" height="65" rx="6" fill="#56aef8"/>
  <rect x="147" y="152.5" width="21" height="72.5" rx="7" fill="#2d86f0"/>
  <path d="M172 149 L209.6 161 Q217.6 163.5 217.6 172 V206.7 Q217.6 215.2 209.6 217.7 L172 229 Q164 231.5 164 223 V155 Q164 146.5 172 149Z" fill="#0630f2"/>
  <path d="M405 543 A22 22 0 0 1 445 543" fill="none" stroke="#d5f5e6" stroke-width="18" stroke-linecap="round"/>
  <path d="M1357 0 C1343 30 1337.5 60 1337.5 97.7 C1337.5 140 1350 175 1377 200.5 C1405 228 1440 244 1478 244 C1500 244 1520 240 1560 230 L1560 100 L1485 120 Q1470 124 1464 112 C1460 100 1460 80 1465 60 C1470 40 1482 20 1492.7 0 Z" fill="#bafae0"/>
  <g clip-path="url(#photoclip)">
    <defs>
      <linearGradient id="tabg" x1="0" y1="0" x2="0" y2="1"><stop offset="0" stop-color="#dcdde8"/><stop offset="1" stop-color="#eceef5"/></linearGradient>
      <linearGradient id="handg" x1="0" y1="0" x2="0.3" y2="1"><stop offset="0" stop-color="#e2c2b4"/><stop offset="0.5" stop-color="#d49e86"/><stop offset="1" stop-color="#c99078"/></linearGradient>
    </defs>
    <rect x="1440" y="300" width="200" height="1000" fill="url(#tabg)"/>
    <path d="M1440 300 H1600 V470 C1560 478 1500 482 1440 495Z" fill="#9a5538"/>
    <path d="M1473 455 C1490 470 1500 480 1527 470 V505 C1500 512 1480 520 1473 525Z" fill="#b88a78" opacity="0.8"/>
    <ellipse cx="1508" cy="445" rx="8" ry="11" fill="#e8dcd8" opacity="0.9"/>
    <path d="M1488 490 L1527 462 L1527 478 L1494 502Z" fill="#f2f2f6" opacity="0.9"/>
    <path d="M1473 560 L1527 540 V548 L1473 570Z" fill="#c5c6cf" opacity="0.7"/>
    <path d="M1490 650 L1527 690" stroke="#b8bac2" stroke-width="3" opacity="0.7"/>
    <path d="M1440 770 C1480 775 1510 800 1540 835 V1250 H1440Z" fill="url(#handg)"/>
    <path d="M1473 756 L1540 830" stroke="#262626" stroke-width="2"/>
    <ellipse cx="1500" cy="840" rx="14" ry="40" fill="#eee6e4" opacity="0.6"/>
    <ellipse cx="1508" cy="960" rx="18" ry="60" fill="#efe4e2" opacity="0.7"/>
    <ellipse cx="1482" cy="1050" rx="12" ry="30" fill="#b77a5e" opacity="0.7"/>
    <path d="M1440 1127 H1489 L1482 1260 H1440Z" fill="#fbfbfb"/>
    <path d="M1540 1030 C1510 1060 1492 1100 1489 1128 L1482 1260 H1600 V1030Z" fill="#505052"/>
  </g>
</svg>
<div class="t" style="left:141px;top:785px;font-size:122px;line-height:149.6px;letter-spacing:3.5px;color:#077d4b;white-space:normal;width:2000px">Mastering Project<br>Management</div>
<div class="t" style="left:142px;top:1103.8px;font-size:34px;line-height:47.6px;letter-spacing:1.45px;color:#383838">Key Principles, Methodologies, and Success Factors for Effective<br>Project Delivery</div>

</div>
<div class="a" style="left:392px;top:218px;width:33px;height:1.5px;background:#9a9a9a"></div>
<div class="a" style="left:392px;top:218px;width:1.5px;height:93px;background:#9a9a9a"></div>
<div class="a" style="left:424.5px;top:218px;width:1500px;height:2px;background:#5f6063"></div>
<div class="a" style="left:392px;top:311px;width:2px;height:1110px;background:#5f6063"></div>
<div class="a" style="left:444.5px;top:211px;width:1.7px;height:8px;background:#5f6063"></div>
<div class="a" style="left:465.3px;top:211px;width:1.7px;height:8px;background:#5f6063"></div>
<div class="a" style="left:486.1px;top:211px;width:1.7px;height:8px;background:#5f6063"></div>
<div class="a" style="left:506.8px;top:204.5px;width:1.7px;height:15px;background:#5f6063"></div>
<div class="a" style="left:527.6px;top:211px;width:1.7px;height:8px;background:#5f6063"></div>
<div class="a" style="left:548.4px;top:211px;width:1.7px;height:8px;background:#5f6063"></div>
<div class="a" style="left:569.2px;top:211px;width:1.7px;height:8px;background:#5f6063"></div>
<div class="a" style="left:590.0px;top:211px;width:1.7px;height:8px;background:#5f6063"></div>
<div class="t" style="left:575.8px;width:30px;text-align:center;top:192.3px;font-size:18.5px;color:#4a4b4e;-webkit-text-stroke:0.35px #4a4b4e">1</div>
<div class="a" style="left:610.8px;top:211px;width:1.7px;height:8px;background:#5f6063"></div>
<div class="a" style="left:631.6px;top:211px;width:1.7px;height:8px;background:#5f6063"></div>
<div class="a" style="left:652.4px;top:211px;width:1.7px;height:8px;background:#5f6063"></div>
<div class="a" style="left:673.2px;top:204.5px;width:1.7px;height:15px;background:#5f6063"></div>
<div class="a" style="left:693.9px;top:211px;width:1.7px;height:8px;background:#5f6063"></div>
<div class="a" style="left:714.7px;top:211px;width:1.7px;height:8px;background:#5f6063"></div>
<div class="a" style="left:735.5px;top:211px;width:1.7px;height:8px;background:#5f6063"></div>
<div class="a" style="left:756.3px;top:211px;width:1.7px;height:8px;background:#5f6063"></div>
<div class="t" style="left:742.1px;width:30px;text-align:center;top:192.3px;font-size:18.5px;color:#4a4b4e;-webkit-text-stroke:0.35px #4a4b4e">2</div>
<div class="a" style="left:777.1px;top:211px;width:1.7px;height:8px;background:#5f6063"></div>
<div class="a" style="left:797.9px;top:211px;width:1.7px;height:8px;background:#5f6063"></div>
<div class="a" style="left:818.7px;top:211px;width:1.7px;height:8px;background:#5f6063"></div>
<div class="a" style="left:839.5px;top:204.5px;width:1.7px;height:15px;background:#5f6063"></div>
<div class="a" style="left:860.2px;top:211px;width:1.7px;height:8px;background:#5f6063"></div>
<div class="a" style="left:881.0px;top:211px;width:1.7px;height:8px;background:#5f6063"></div>
<div class="a" style="left:901.8px;top:211px;width:1.7px;height:8px;background:#5f6063"></div>
<div class="a" style="left:922.6px;top:211px;width:1.7px;height:8px;background:#5f6063"></div>
<div class="t" style="left:908.4px;width:30px;text-align:center;top:192.3px;font-size:18.5px;color:#4a4b4e;-webkit-text-stroke:0.35px #4a4b4e">3</div>
<div class="a" style="left:943.4px;top:211px;width:1.7px;height:8px;background:#5f6063"></div>
<div class="a" style="left:964.2px;top:211px;width:1.7px;height:8px;background:#5f6063"></div>
<div class="a" style="left:985.0px;top:211px;width:1.7px;height:8px;background:#5f6063"></div>
<div class="a" style="left:1005.8px;top:204.5px;width:1.7px;height:15px;background:#5f6063"></div>
<div class="a" style="left:1026.5px;top:211px;width:1.7px;height:8px;background:#5f6063"></div>
<div class="a" style="left:1047.3px;top:211px;width:1.7px;height:8px;background:#5f6063"></div>
<div class="a" style="left:1068.1px;top:211px;width:1.7px;height:8px;background:#5f6063"></div>
<div class="a" style="left:1088.9px;top:211px;width:1.7px;height:8px;background:#5f6063"></div>
<div class="t" style="left:1074.7px;width:30px;text-align:center;top:192.3px;font-size:18.5px;color:#4a4b4e;-webkit-text-stroke:0.35px #4a4b4e">4</div>
<div class="a" style="left:1109.7px;top:211px;width:1.7px;height:8px;background:#5f6063"></div>
<div class="a" style="left:1130.5px;top:211px;width:1.7px;height:8px;background:#5f6063"></div>
<div class="a" style="left:1151.3px;top:211px;width:1.7px;height:8px;background:#5f6063"></div>
<div class="a" style="left:1172.0px;top:204.5px;width:1.7px;height:15px;background:#5f6063"></div>
<div class="a" style="left:1192.8px;top:211px;width:1.7px;height:8px;background:#5f6063"></div>
<div class="a" style="left:1213.6px;top:211px;width:1.7px;height:8px;background:#5f6063"></div>
<div class="a" style="left:1234.4px;top:211px;width:1.7px;height:8px;background:#5f6063"></div>
<div class="a" style="left:1255.2px;top:211px;width:1.7px;height:8px;background:#5f6063"></div>
<div class="t" style="left:1241.0px;width:30px;text-align:center;top:192.3px;font-size:18.5px;color:#4a4b4e;-webkit-text-stroke:0.35px #4a4b4e">5</div>
<div class="a" style="left:1276.0px;top:211px;width:1.7px;height:8px;background:#5f6063"></div>
<div class="a" style="left:1296.8px;top:211px;width:1.7px;height:8px;background:#5f6063"></div>
<div class="a" style="left:1317.6px;top:211px;width:1.7px;height:8px;background:#5f6063"></div>
<div class="a" style="left:1338.4px;top:204.5px;width:1.7px;height:15px;background:#5f6063"></div>
<div class="a" style="left:1359.1px;top:211px;width:1.7px;height:8px;background:#5f6063"></div>
<div class="a" style="left:1379.9px;top:211px;width:1.7px;height:8px;background:#5f6063"></div>
<div class="a" style="left:1400.7px;top:211px;width:1.7px;height:8px;background:#5f6063"></div>
<div class="a" style="left:1421.5px;top:211px;width:1.7px;height:8px;background:#5f6063"></div>
<div class="t" style="left:1407.3px;width:30px;text-align:center;top:192.3px;font-size:18.5px;color:#4a4b4e;-webkit-text-stroke:0.35px #4a4b4e">6</div>
<div class="a" style="left:1442.3px;top:211px;width:1.7px;height:8px;background:#5f6063"></div>
<div class="a" style="left:1463.1px;top:211px;width:1.7px;height:8px;background:#5f6063"></div>
<div class="a" style="left:1483.9px;top:211px;width:1.7px;height:8px;background:#5f6063"></div>
<div class="a" style="left:1504.7px;top:204.5px;width:1.7px;height:15px;background:#5f6063"></div>
<div class="a" style="left:1525.4px;top:211px;width:1.7px;height:8px;background:#5f6063"></div>
<div class="a" style="left:1546.2px;top:211px;width:1.7px;height:8px;background:#5f6063"></div>
<div class="a" style="left:1567.0px;top:211px;width:1.7px;height:8px;background:#5f6063"></div>
<div class="a" style="left:1587.8px;top:211px;width:1.7px;height:8px;background:#5f6063"></div>
<div class="t" style="left:1573.6px;width:30px;text-align:center;top:192.3px;font-size:18.5px;color:#4a4b4e;-webkit-text-stroke:0.35px #4a4b4e">7</div>
<div class="a" style="left:1608.6px;top:211px;width:1.7px;height:8px;background:#5f6063"></div>
<div class="a" style="left:1629.4px;top:211px;width:1.7px;height:8px;background:#5f6063"></div>
<div class="a" style="left:1650.2px;top:211px;width:1.7px;height:8px;background:#5f6063"></div>
<div class="a" style="left:1671.0px;top:204.5px;width:1.7px;height:15px;background:#5f6063"></div>
<div class="a" style="left:1691.7px;top:211px;width:1.7px;height:8px;background:#5f6063"></div>
<div class="a" style="left:1712.5px;top:211px;width:1.7px;height:8px;background:#5f6063"></div>
<div class="a" style="left:1733.3px;top:211px;width:1.7px;height:8px;background:#5f6063"></div>
<div class="a" style="left:1754.1px;top:211px;width:1.7px;height:8px;background:#5f6063"></div>
<div class="t" style="left:1739.9px;width:30px;text-align:center;top:192.3px;font-size:18.5px;color:#4a4b4e;-webkit-text-stroke:0.35px #4a4b4e">8</div>
<div class="a" style="left:1774.9px;top:211px;width:1.7px;height:8px;background:#5f6063"></div>
<div class="a" style="left:1795.7px;top:211px;width:1.7px;height:8px;background:#5f6063"></div>
<div class="a" style="left:1816.5px;top:211px;width:1.7px;height:8px;background:#5f6063"></div>
<div class="a" style="left:1837.3px;top:204.5px;width:1.7px;height:15px;background:#5f6063"></div>
<div class="a" style="left:1858.0px;top:211px;width:1.7px;height:8px;background:#5f6063"></div>
<div class="a" style="left:1878.8px;top:211px;width:1.7px;height:8px;background:#5f6063"></div>
<div class="a" style="left:1899.6px;top:211px;width:1.7px;height:8px;background:#5f6063"></div>
<div class="a" style="left:1920.4px;top:211px;width:1.7px;height:8px;background:#5f6063"></div>
<div class="t" style="left:1906.2px;width:30px;text-align:center;top:192.3px;font-size:18.5px;color:#4a4b4e;-webkit-text-stroke:0.35px #4a4b4e">9</div>

<div class="a" style="left:385.5px;top:310.6px;width:8px;height:1.5px;background:#5a5b5e"></div>
<div class="a" style="left:385.5px;top:331.3px;width:8px;height:1.5px;background:#5a5b5e"></div>
<div class="a" style="left:385.5px;top:352.1px;width:8px;height:1.5px;background:#5a5b5e"></div>
<div class="a" style="left:385.5px;top:372.8px;width:8px;height:1.5px;background:#5a5b5e"></div>
<div class="a" style="left:378.5px;top:393.6px;width:15px;height:1.5px;background:#5a5b5e"></div>
<div class="a" style="left:385.5px;top:414.3px;width:8px;height:1.5px;background:#5a5b5e"></div>
<div class="a" style="left:385.5px;top:435.1px;width:8px;height:1.5px;background:#5a5b5e"></div>
<div class="a" style="left:385.5px;top:455.8px;width:8px;height:1.5px;background:#5a5b5e"></div>
<div class="a" style="left:385.5px;top:476.6px;width:8px;height:1.5px;background:#5a5b5e"></div>
<div class="t" style="left:360.5px;width:30px;text-align:center;top:468.1px;font-size:18.5px;height:18.5px;color:#4a4b4e;-webkit-text-stroke:0.35px #4a4b4e;transform:rotate(-90deg)">1</div>
<div class="a" style="left:385.5px;top:497.3px;width:8px;height:1.5px;background:#5a5b5e"></div>
<div class="a" style="left:385.5px;top:518.1px;width:8px;height:1.5px;background:#5a5b5e"></div>
<div class="a" style="left:385.5px;top:538.9px;width:8px;height:1.5px;background:#5a5b5e"></div>
<div class="a" style="left:378.5px;top:559.6px;width:15px;height:1.5px;background:#5a5b5e"></div>
<div class="a" style="left:385.5px;top:580.4px;width:8px;height:1.5px;background:#5a5b5e"></div>
<div class="a" style="left:385.5px;top:601.1px;width:8px;height:1.5px;background:#5a5b5e"></div>
<div class="a" style="left:385.5px;top:621.9px;width:8px;height:1.5px;background:#5a5b5e"></div>
<div class="a" style="left:385.5px;top:642.6px;width:8px;height:1.5px;background:#5a5b5e"></div>
<div class="t" style="left:360.5px;width:30px;text-align:center;top:634.1px;font-size:18.5px;height:18.5px;color:#4a4b4e;-webkit-text-stroke:0.35px #4a4b4e;transform:rotate(-90deg)">2</div>
<div class="a" style="left:385.5px;top:663.4px;width:8px;height:1.5px;background:#5a5b5e"></div>
<div class="a" style="left:385.5px;top:684.1px;width:8px;height:1.5px;background:#5a5b5e"></div>
<div class="a" style="left:385.5px;top:704.9px;width:8px;height:1.5px;background:#5a5b5e"></div>
<div class="a" style="left:378.5px;top:725.6px;width:15px;height:1.5px;background:#5a5b5e"></div>
<div class="a" style="left:385.5px;top:746.4px;width:8px;height:1.5px;background:#5a5b5e"></div>
<div class="a" style="left:385.5px;top:767.2px;width:8px;height:1.5px;background:#5a5b5e"></div>
<div class="a" style="left:385.5px;top:787.9px;width:8px;height:1.5px;background:#5a5b5e"></div>
<div class="a" style="left:385.5px;top:808.7px;width:8px;height:1.5px;background:#5a5b5e"></div>
<div class="t" style="left:360.5px;width:30px;text-align:center;top:800.2px;font-size:18.5px;height:18.5px;color:#4a4b4e;-webkit-text-stroke:0.35px #4a4b4e;transform:rotate(-90deg)">3</div>
<div class="a" style="left:385.5px;top:829.4px;width:8px;height:1.5px;background:#5a5b5e"></div>
<div class="a" style="left:385.5px;top:850.2px;width:8px;height:1.5px;background:#5a5b5e"></div>
<div class="a" style="left:385.5px;top:870.9px;width:8px;height:1.5px;background:#5a5b5e"></div>
<div class="a" style="left:378.5px;top:891.7px;width:15px;height:1.5px;background:#5a5b5e"></div>
<div class="a" style="left:385.5px;top:912.4px;width:8px;height:1.5px;background:#5a5b5e"></div>
<div class="a" style="left:385.5px;top:933.2px;width:8px;height:1.5px;background:#5a5b5e"></div>
<div class="a" style="left:385.5px;top:954.0px;width:8px;height:1.5px;background:#5a5b5e"></div>
<div class="a" style="left:385.5px;top:974.7px;width:8px;height:1.5px;background:#5a5b5e"></div>
<div class="t" style="left:360.5px;width:30px;text-align:center;top:966.2px;font-size:18.5px;height:18.5px;color:#4a4b4e;-webkit-text-stroke:0.35px #4a4b4e;transform:rotate(-90deg)">4</div>
<div class="a" style="left:385.5px;top:995.5px;width:8px;height:1.5px;background:#5a5b5e"></div>
<div class="a" style="left:385.5px;top:1016.2px;width:8px;height:1.5px;background:#5a5b5e"></div>
<div class="a" style="left:385.5px;top:1037.0px;width:8px;height:1.5px;background:#5a5b5e"></div>
<div class="a" style="left:378.5px;top:1057.7px;width:15px;height:1.5px;background:#5a5b5e"></div>
<div class="a" style="left:385.5px;top:1078.5px;width:8px;height:1.5px;background:#5a5b5e"></div>
<div class="a" style="left:385.5px;top:1099.2px;width:8px;height:1.5px;background:#5a5b5e"></div>
<div class="a" style="left:385.5px;top:1120.0px;width:8px;height:1.5px;background:#5a5b5e"></div>
<div class="a" style="left:385.5px;top:1140.8px;width:8px;height:1.5px;background:#5a5b5e"></div>
<div class="t" style="left:360.5px;width:30px;text-align:center;top:1132.2px;font-size:18.5px;height:18.5px;color:#4a4b4e;-webkit-text-stroke:0.35px #4a4b4e;transform:rotate(-90deg)">5</div>
<div class="a" style="left:385.5px;top:1161.5px;width:8px;height:1.5px;background:#5a5b5e"></div>
<div class="a" style="left:385.5px;top:1182.3px;width:8px;height:1.5px;background:#5a5b5e"></div>
<div class="a" style="left:385.5px;top:1203.0px;width:8px;height:1.5px;background:#5a5b5e"></div>
<div class="a" style="left:378.5px;top:1223.8px;width:15px;height:1.5px;background:#5a5b5e"></div>
<div class="a" style="left:385.5px;top:1244.5px;width:8px;height:1.5px;background:#5a5b5e"></div>
<div class="a" style="left:385.5px;top:1265.3px;width:8px;height:1.5px;background:#5a5b5e"></div>
<div class="a" style="left:385.5px;top:1286.0px;width:8px;height:1.5px;background:#5a5b5e"></div>
<div class="a" style="left:385.5px;top:1306.8px;width:8px;height:1.5px;background:#5a5b5e"></div>
<div class="t" style="left:360.5px;width:30px;text-align:center;top:1298.3px;font-size:18.5px;height:18.5px;color:#4a4b4e;-webkit-text-stroke:0.35px #4a4b4e;transform:rotate(-90deg)">6</div>
<div class="a" style="left:385.5px;top:1327.5px;width:8px;height:1.5px;background:#5a5b5e"></div>
<div class="a" style="left:385.5px;top:1348.3px;width:8px;height:1.5px;background:#5a5b5e"></div>
<div class="a" style="left:385.5px;top:1369.1px;width:8px;height:1.5px;background:#5a5b5e"></div>
<div class="a" style="left:378.5px;top:1389.8px;width:15px;height:1.5px;background:#5a5b5e"></div>
<div class="a" style="left:385.5px;top:1410.6px;width:8px;height:1.5px;background:#5a5b5e"></div>
<div id="scrim"></div>
<!-- ============ DIALOG ============ -->
<div id="dlg">
  <div class="t" style="left:40.5px;top:47.3px;font-size:41px;letter-spacing:0.26px;color:#1f1f1f">Presentation display options</div>
  <svg style="left:0;top:0" width="934" height="900">
    <circle cx="81.7" cy="171.2" r="40.15" fill="none" stroke="#0e55a6" stroke-width="4.7"/>
  </svg>
  <div class="cb" style="top:156px"></div>
  <div class="lbl" style="left:122.4px;top:146.2px;font-size:22px;letter-spacing:0.4px">Presenter view</div>
  <div class="t" style="left:123px;top:177.9px;font-size:20px;letter-spacing:0.63px;color:#3c4043">Start slideshow with speaker notes and audience Q&amp;A</div>
  <div class="cb" style="top:253.7px"></div>
  <div class="lbl" style="left:122.4px;top:257.5px;font-size:23px;letter-spacing:0.2px">Present from beginning</div>
  <div class="a" style="left:66.5px;top:350px;width:30.5px;height:30.9px;background:#0b57d0;border-radius:3.5px"></div>
  <svg style="left:66.5px;top:350px" width="31" height="31" viewBox="0 0 31 31"><path d="M6.5 15.8L12.5 21.8L24.5 9.5" fill="none" stroke="#fff" stroke-width="3.6"/></svg>
  <div class="lbl" style="left:122.4px;top:354.9px;font-size:23px">Full screen</div>
  <div class="t" style="left:40px;top:445.3px;font-size:36px;letter-spacing:0.87px;color:#444746">Display slideshow on</div>
  <svg style="left:65px;top:530px" width="34" height="34" viewBox="0 0 34 34"><circle cx="17" cy="17" r="15" fill="none" stroke="#0b57d0" stroke-width="4"/><circle cx="17" cy="17" r="8.9" fill="#0b57d0"/></svg>
  <div class="lbl" style="left:122.4px;top:536.5px;font-size:23px;letter-spacing:0.1px">Current screen (current)</div>

  <!-- cards -->
  <div class="card" style="top:135px"></div>
  <svg style="left:764.2px;top:135px" width="123" height="68" viewBox="0 0 123 68">
    <rect x="32.2" y="8.2" width="80" height="45.8" fill="#c5c6c6"/>
    <rect x="11.2" y="28.7" width="48.9" height="30.3" fill="#fff" stroke="#0b57d0" stroke-width="2.2"/>
    <rect x="12.3" y="29.8" width="22.5" height="28.1" fill="#d3e3fd"/>
    <rect x="14.6" y="39" width="18.4" height="9.8" rx="2" fill="#0b57d0"/>
    <path d="M38.8 39.3H55.4M38.8 44.8H55.4M38.8 50H49.8" stroke="#0b57d0" stroke-width="1.6"/>
  </svg>
  <div class="card" style="top:232.3px"></div>
  <svg style="left:764.2px;top:232.3px" width="123" height="68" viewBox="0 0 123 68">
    <rect x="25.4" y="25.4" width="56.9" height="31.3" fill="#fff" stroke="#c4c7c5" stroke-width="1.8"/>
    <rect x="33.7" y="17.1" width="57.5" height="31.1" fill="#fff" stroke="#c4c7c5" stroke-width="1.8"/>
    <rect x="42.1" y="8.2" width="57.1" height="31.8" rx="1.5" fill="#d3e3fd" stroke="#0b57d0" stroke-width="2.2"/>
  </svg>
  <div class="card" style="top:329.4px"></div>
  <svg style="left:764.2px;top:329.4px" width="123" height="68" viewBox="0 0 123 68">
    <rect x="4.5" y="3.2" width="115.5" height="60.9" rx="7" fill="#d3e3fd" stroke="#0b57d0" stroke-width="2.4"/>
  </svg>
  <!-- laptop -->
  <svg style="left:800.9px;top:522px" width="72" height="45" viewBox="0 0 72 45">
    <rect x="7.3" y="1.2" width="56.3" height="37.3" rx="3.5" fill="#fff" stroke="#c4c7c5" stroke-width="2.4"/>
    <rect x="11.7" y="5" width="50.1" height="31.4" rx="1.2" fill="#d3e3fd" stroke="#0b57d0" stroke-width="2.2"/>
    <rect x="0" y="39.8" width="71.1" height="3" fill="#c4c7c5"/>
    <rect x="12" y="38.5" width="48" height="6" fill="#c4c7c5"/>
  </svg>

  <div class="a" style="left:41.2px;top:631.2px;width:851.6px;height:118.1px;border:1.3px solid #c6d9f7;border-radius:12px"></div>
  <div class="t" style="left:60px;top:677px;font-size:25px;letter-spacing:-0.25px;color:#3c4043">Allow Slides permission to connect to additional display</div>
  <div class="t" style="left:789.2px;top:679px;font-size:23.2px;font-weight:bold;color:#0b57d0">Allow</div>
  <div class="t" style="left:525.8px;top:815.3px;font-size:23.5px;letter-spacing:0.5px;font-weight:bold;color:#0b57d0">Cancel</div>
  <div class="a" style="left:638.5px;top:791px;width:255px;height:67.7px;background:#0b57d0;border-radius:34px"></div>
  <div class="t" style="left:679.4px;top:812.8px;font-size:25px;font-weight:bold;letter-spacing:-0.85px;color:#fff">Start slideshow</div>
</div>


</body></html>
